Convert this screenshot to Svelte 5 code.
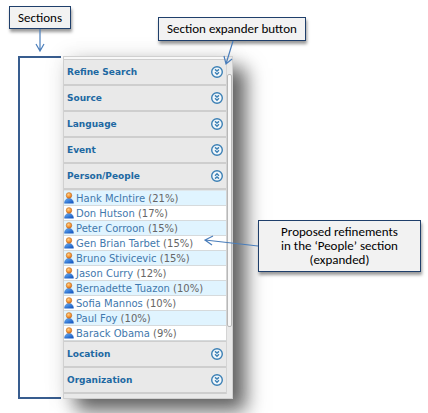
<script>
  let sections = $state([
    { title: 'Refine Search', open: false, people: [] },
    { title: 'Source', open: false, people: [] },
    { title: 'Language', open: false, people: [] },
    { title: 'Event', open: false, people: [] },
    {
      title: 'Person/People',
      open: true,
      people: [
        { name: 'Hank McIntire', share: 21 },
        { name: 'Don Hutson', share: 17 },
        { name: 'Peter Corroon', share: 15 },
        { name: 'Gen Brian Tarbet', share: 15 },
        { name: 'Bruno Stivicevic', share: 15 },
        { name: 'Jason Curry', share: 12 },
        { name: 'Bernadette Tuazon', share: 10 },
        { name: 'Sofia Mannos', share: 10 },
        { name: 'Paul Foy', share: 10 },
        { name: 'Barack Obama', share: 9 }
      ]
    },
    { title: 'Location', open: false, people: [] },
    { title: 'Organization', open: false, people: [] }
  ]);
</script>

<svg class="defs" aria-hidden="true">
  <defs>
    <radialGradient id="head" cx="0.4" cy="0.35" r="0.7">
      <stop offset="0" stop-color="#ffd08a" />
      <stop offset="0.6" stop-color="#f59331" />
      <stop offset="1" stop-color="#c8691c" />
    </radialGradient>
    <linearGradient id="body" x1="0" y1="0" x2="1" y2="1">
      <stop offset="0" stop-color="#6db3f5" />
      <stop offset="1" stop-color="#0b4fc0" />
    </linearGradient>
  </defs>
</svg>

<div class="figure">
  <div class="bracket"></div>

  <div class="panel">
    <div class="sections">
      {#each sections as section}
        <section>
          <h2>
            <button aria-expanded={section.open} onclick={() => (section.open = !section.open)}>
              <span>{section.title}</span>
              <svg class="expander" class:open={section.open} viewBox="0 0 12 12" aria-hidden="true">
                <circle cx="6" cy="6" r="5.3" />
                <path d="M4 3.4 6 5.1 8 3.4M4 6.3 6 8.2 8 6.3" />
              </svg>
            </button>
          </h2>
          {#if section.open && section.people.length}
            <ul>
              {#each section.people as person}
                <li>
                  <svg class="person" viewBox="0 0 10 12" aria-hidden="true">
                    <path d="M0.5 11.2C0.5 8.5 2.2 6.4 5 6.4S9.5 8.5 9.5 11.2Z" fill="url(#body)" stroke="#2a63bd" stroke-width="0.5" />
                    <circle cx="5" cy="3.4" r="2.8" fill="url(#head)" stroke="#b8702f" stroke-width="0.5" />
                  </svg>
                  <span><a href="#people">{person.name}</a> ({person.share}%)</span>
                </li>
              {/each}
            </ul>
          {/if}
        </section>
      {/each}
    </div>
    <div class="track"><div class="thumb"></div></div>
  </div>

  <div class="callout sections-note">Sections</div>
  <div class="callout button-note">Section expander button</div>
  <div class="callout people-note">Proposed refinements<br />in the ‘People’ section<br />(expanded)</div>

  <svg class="arrow sections-arrow" width="12" height="26" viewBox="0 0 12 26" aria-hidden="true">
    <path d="M6 0V22M2 15 6 22 10 15" />
  </svg>
  <svg class="arrow button-arrow" width="14" height="26" viewBox="0 0 14 26" aria-hidden="true">
    <path d="M11 0 4 23M2 15 4 23 10 18" />
  </svg>
  <svg class="arrow people-arrow" width="56" height="16" viewBox="0 0 56 16" aria-hidden="true">
    <path d="M55 11 2 5M10 1 2 5 9 10" />
  </svg>
</div>

<style>
  :global(body) {
    background: #fff;
  }

  .defs {
    position: absolute;
    width: 0;
    height: 0;
  }

  .figure {
    position: relative;
    display: flex;
    gap: 2px;
    padding: 56px 195px 14px 18px;
  }

  .bracket {
    flex: 0 0 43px;
    box-sizing: border-box;
    border: 2px solid #385d8f;
    border-right: 0;
  }

  .panel {
    flex: 1;
    min-width: 0;
    display: flex;
    box-sizing: border-box;
    padding-bottom: 4px;
    background: #e9e9e9;
    border: 1px solid #d0d0d0;
    box-shadow: 13px 12px 18px rgba(0, 0, 0, 0.6), 0 0 20px rgba(0, 0, 0, 0.1);
    font-family: Verdana, "DejaVu Sans", sans-serif;
  }

  .sections {
    flex: 1;
    min-width: 0;
    border-top: 2px solid #f8f8f8;
    border-right: 1px solid #d4d4d4;
  }

  section:first-child {
    border-top: 1px solid #cfcfcf;
  }

  h2 {
    margin: 0;
  }

  button {
    display: flex;
    align-items: center;
    justify-content: space-between;
    box-sizing: border-box;
    width: 100%;
    height: 26px;
    padding: 0 3px;
    border: 0;
    border-bottom: 2px solid #cecece;
    background: #e9e9e9;
    color: #2068a2;
    font: bold 9px Verdana, "DejaVu Sans", sans-serif;
    cursor: pointer;
  }

  .expander {
    width: 12px;
    height: 12px;
    fill: none;
    stroke: #3c80b5;
    stroke-width: 1.4;
  }

  .expander circle {
    fill: #f4f8fb;
  }

  .expander.open {
    transform: rotate(180deg);
  }

  ul {
    margin: 0;
    padding: 0;
    list-style: none;
    border-top: 1px solid #dfe6ea;
    border-bottom: 1px solid #cecece;
  }

  li {
    display: flex;
    align-items: center;
    gap: 2px;
    box-sizing: border-box;
    height: 15px;
    border-bottom: 1px solid #d6dadc;
    background: #fff;
    color: #666;
    font-size: 10px;
    white-space: nowrap;
  }

  li:nth-child(odd) {
    background: #e0f4ff;
  }

  li a {
    color: #3f78ad;
    text-decoration: none;
  }

  .person {
    flex: none;
    width: 10px;
    height: 12px;
  }

  .track {
    display: flex;
    width: 5px;
    padding: 17px 0 67px;
  }

  .thumb {
    flex: 1;
    border: 1px solid #b8b8b8;
    border-radius: 2px;
    background: #f8f8f8;
  }

  .callout {
    position: absolute;
    display: flex;
    align-items: center;
    justify-content: center;
    box-sizing: border-box;
    border: 1px solid #1f3f6b;
    background: #f2f2f2;
    box-shadow: 1px 3px 3px rgba(0, 0, 0, 0.4);
    color: #000;
    font: 13px/14px Calibri, Carlito, Lato, sans-serif;
    text-align: center;
    white-space: nowrap;
  }

  .sections-note {
    top: 6px;
    left: 9px;
    width: 62px;
    height: 23px;
  }

  .button-note {
    top: 17px;
    right: 122px;
    width: 148px;
    height: 24px;
  }

  .people-note {
    top: 220px;
    right: 7px;
    width: 163px;
    height: 52px;
  }

  .arrow {
    position: absolute;
    fill: none;
    stroke: #4a7ebb;
    stroke-width: 1.2;
  }

  .sections-arrow {
    top: 29px;
    left: 34px;
  }

  .button-arrow {
    top: 41px;
    right: 192px;
  }

  .people-arrow {
    top: 235px;
    right: 169px;
  }
</style>
